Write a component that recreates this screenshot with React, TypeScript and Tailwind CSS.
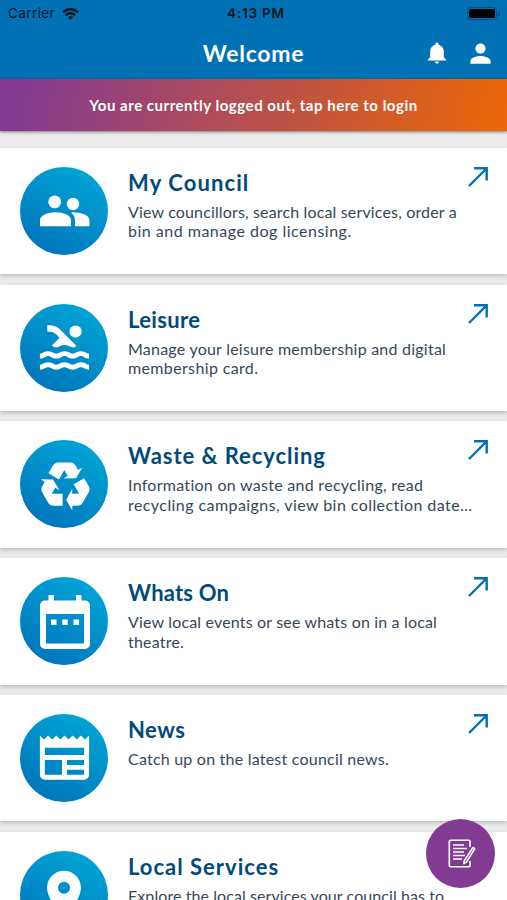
import React from "react";
import { IoMdNotifications, IoMdPerson } from "react-icons/io";
import { MdPool, MdLocationOn } from "react-icons/md";

const PeopleIcon = () => (
    <svg viewBox="0 0 50 32" className="w-[50px] h-8 ml-px" fill="currentColor">
        <circle cx="14.700" cy="6.900" r="6.400" />
        <circle cx="33" cy="9" r="6.200" />
        <path d="M0 31.300V25.500C0 20 8 17.300 15.500 17.300S31 20 31 25.500V31.300z" />
        <path d="M32.500 17.300C41 17.300 49.500 20 49.500 25.500V31.300H35V25.500C35 22 33.800 19.700 31 17.400z" />
    </svg>
)

const RecycleIcon = () => (
    <svg viewBox="0 0 24 24" className="size-[58px] ml-px" fill="currentColor">
        <path d="M21.82,15.42L19.32,19.75C18.83,20.61 17.92,21.06 17,21H15V23L12.5,18.5L15,14V16H17.82L15.6,12.15L19.93,9.65L21.73,12.77C22.25,13.54 22.32,14.57 21.82,15.42M9.21,3.06H14.21C15.19,3.06 16.04,3.63 16.45,4.45L17.45,6.19L19.18,5.19L16.54,9.6L11.39,9.69L13.12,8.69L11.71,6.24L9.5,10.09L5.16,7.59L6.96,4.47C7.37,3.64 8.22,3.06 9.21,3.06M5.05,19.76L2.55,15.43C2.06,14.58 2.13,13.56 2.64,12.79L3.64,11.06L1.91,10.06L7.05,10.14L9.7,14.56L7.97,13.56L6.56,16H11V21H7.4C6.47,21.07 5.55,20.61 5.05,19.76Z" />
    </svg>
)

const CalendarIcon = () => (
    <svg viewBox="0 0 50 54" className="w-[50px] h-[54px] mt-px ml-px" fill="currentColor">
        <path fillRule="evenodd" d="M8.500 0h5.500v5.500h22V0h5.500v5.500H45a5 5 0 0 1 5 5V49a5 5 0 0 1-5 5H5a5 5 0 0 1-5-5V10.500a5 5 0 0 1 5-5h3.500zM6 19v29.500h38V19z" />
        <path d="M11 24.500h5.500v5.500H11zM22.250 24.500h5.500v5.500h-5.500zM33.500 24.500H39v5.500h-5.500z" />
    </svg>
)

const NewsIcon = () => (
    <svg viewBox="0 0 24 24" className="size-[59px]" fill="currentColor">
        <path d="M20,11H4V8H20M20,15H13V13H20M20,19H13V17H20M11,19H4V13H11M20.33,4.67L18.67,3L17,4.67L15.33,3L13.67,4.67L12,3L10.33,4.67L8.67,3L7,4.67L5.33,3L3.67,4.67L2,3V19A2,2 0 0,0 4,21H20A2,2 0 0,0 22,19V3L20.33,4.67Z" />
    </svg>
)

const cards = [
    {
        title: "My Council", spacing: "tracking-[1.1px]", icon: <PeopleIcon />,
        lines: [
            { text: "View councillors, search local services, order a", spacing: "tracking-[0.15px]" },
            { text: "bin and manage dog licensing.", spacing: "tracking-[0.5px]" },
        ]
    },
    {
        title: "Leisure", spacing: "tracking-[0.35px]", icon: <MdPool className="size-[59px]" />,
        lines: [
            { text: "Manage your leisure membership and digital", spacing: "tracking-[0.23px]" },
            { text: "membership card.", spacing: "tracking-[0.36px]" },
        ]
    },
    {
        title: "Waste & Recycling", spacing: "tracking-[0.95px]", icon: <RecycleIcon />,
        lines: [
            { text: "Information on waste and recycling, read", spacing: "tracking-[0.28px]" },
            { text: "recycling campaigns, view bin collection date…", spacing: "tracking-[0.43px]" },
        ]
    },
    {
        title: "Whats On", spacing: "tracking-[0.2px]", icon: <CalendarIcon />,
        lines: [
            { text: "View local events or see whats on in a local", spacing: "tracking-[0.17px]" },
            { text: "theatre.", spacing: "tracking-[0.2px]" },
        ]
    },
    {
        title: "News", spacing: "tracking-[0.5px]", icon: <NewsIcon />,
        lines: [
            { text: "Catch up on the latest council news.", spacing: "tracking-[0.22px]" },
        ]
    },
    {
        title: "Local Services", spacing: "tracking-[1px]", icon: <MdLocationOn className="size-[58px]" />,
        lines: [
            { text: "Explore the local services your council has to", spacing: "tracking-[0.08px]" },
        ]
    },
]

const App = () => {
    return (
        <main className="relative w-[507px] h-[900px] overflow-hidden bg-[#ebebeb] font-['Lato',sans-serif]">
            <header className="h-[79px] bg-[#0071b5]">
                <div className="grid grid-cols-3 items-center h-[27px] px-2 font-['Inter',sans-serif] text-[13.5px] text-[#06151f]">
                    <div className="flex items-center gap-[7px]">
                        <span className="tracking-[0.4px]">Carrier</span>
                        <svg viewBox="0 0 17 12" className="w-[17px] h-3" fill="none" stroke="currentColor" strokeWidth="2.4">
                            <path d="M1 4.300a10.800 10.800 0 0 1 15 0M3.700 7.100a7 7 0 0 1 9.600 0" />
                            <path d="M8.500 12 5.800 9.200a4 4 0 0 1 5.400 0z" fill="currentColor" stroke="none" />
                        </svg>
                    </div>
                    <span className="pl-[5px] text-center font-semibold tracking-[0.8px] whitespace-nowrap">4:13 PM</span>
                    <div className="flex items-center justify-end gap-px -mr-px">
                        <div className="w-[30px] h-[13px] rounded-[4px] border border-[#06507d] p-px">
                            <div className="h-full rounded-[2px] bg-black" />
                        </div>
                        <div className="w-[2px] h-1 rounded-r bg-[#06507d]" />
                    </div>
                </div>
                <div className="grid grid-cols-[1fr_auto_1fr] items-center h-[52px] text-white">
                    <span />
                    <h1 className="text-[23px] font-bold tracking-[0.7px]">Welcome</h1>
                    <div className="flex items-center justify-end gap-[17px] pr-[13px]">
                        <IoMdNotifications className="size-[26px]" />
                        <IoMdPerson className="size-[27px]" />
                    </div>
                </div>
            </header>
            <div className="flex items-center justify-center h-[51.500px] bg-[linear-gradient(105deg,#833a92_4%,#eb6608_98%)] shadow-[0_1px_3px_rgba(0,0,0,0.5)] text-white text-[15px] font-bold tracking-[0.52px]">
                You are currently logged out, tap here to login
            </div>
            <section className="flex flex-col gap-[10.300px] pt-[17.300px]">
                {cards.map((item, index) =>
                    <article key={index} className="flex shrink-0 h-[126.500px] bg-white pl-5 pt-[19px] shadow-[0_2px_4px_rgba(0,0,0,0.2)]">
                        <div className="flex shrink-0 items-center justify-center size-[88px] rounded-full text-white bg-[linear-gradient(30deg,#0072b9_5%,#00a5d6_90%)]">
                            {item.icon}
                        </div>
                        <div className="flex-1 min-w-0 pl-5">
                            <h2 className={`mb-[3px] text-[22px] leading-8 font-bold text-[#004b7c] ${item.spacing}`}>{item.title}</h2>
                            {item.lines.map((line) =>
                                <p key={line.text} className={`text-base leading-[19.500px] whitespace-nowrap text-[#35485a] ${line.spacing}`}>{line.text}</p>
                            )}
                        </div>
                        <svg viewBox="0 0 20 20" className="shrink-0 mr-[19px] size-5" fill="none" stroke="#0071b5" strokeWidth="2.400">
                            <path d="M1 19 18.500 1.500M6 1.300h12.700V13.500" />
                        </svg>
                    </article>
                )}
            </section>
            <button className="absolute left-[426px] top-[819px] flex items-center justify-center size-[69px] rounded-full bg-[#833a92] text-white">
                <svg viewBox="0 0 28 30" className="w-7 h-[30px] ml-[3px] mt-px" fill="none" stroke="currentColor" strokeWidth="1.6" strokeLinejoin="round">
                    <path d="M22 8V2.500a1.200 1.200 0 0 0-1.200-1.200H2.500a1.200 1.200 0 0 0-1.200 1.200v24a1.200 1.200 0 0 0 1.200 1.200h18.300a1.200 1.200 0 0 0 1.200-1.200V22" />
                    <path d="M5 6h11M5 9.500h14M5 13h11M5 16.500h12M5 20h9" />
                    <path d="m25 8.500 1.800 1.200L18.500 23l-2.700 1.600.5-3z" />
                </svg>
            </button>
        </main>
    )
}

export default App
